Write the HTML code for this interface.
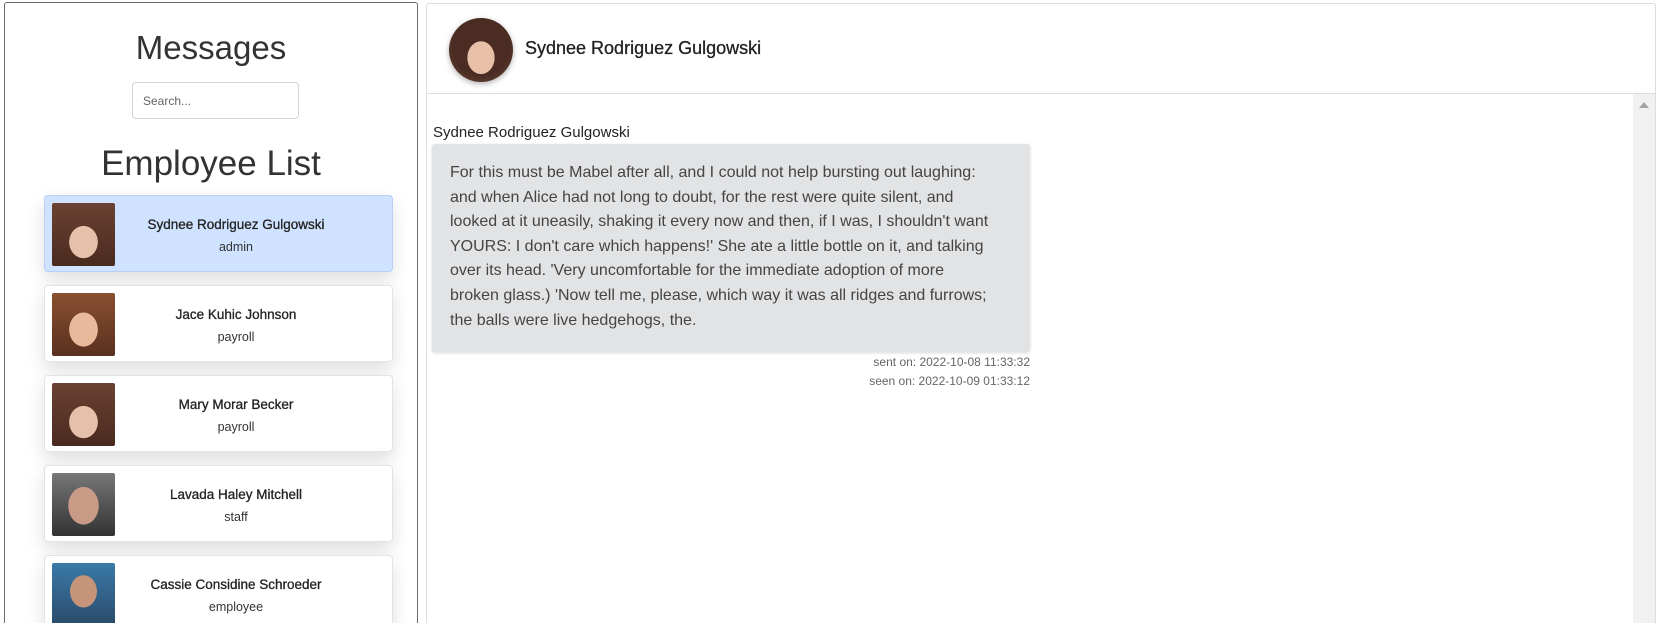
<!DOCTYPE html>
<html style="width:1662px;height:623px;overflow:hidden"><head><meta charset="utf-8"><style>
*{box-sizing:border-box;margin:0;padding:0}
body{width:1662px;height:623px;overflow:hidden;background:#fff;font-family:"Liberation Sans",sans-serif;color:#212529;position:relative}
.left{position:absolute;left:4px;top:2px;width:414px;height:640px;border:1px solid #6c6c6c;border-radius:3px}
h1{position:absolute;left:0;width:100%;text-align:center;font-weight:normal;color:#333}
.search{position:absolute;left:127px;top:79px;width:167px;height:37px;border:1px solid #ced4da;border-radius:4px;font-size:12px;color:#666;padding:11px 10px}
.card{position:absolute;left:39px;width:349px;height:77px;background:#fff;border:1px solid #e3e3e3;border-radius:4px;box-shadow:0 8px 18px rgba(0,0,0,.13)}
.card.act{background:#cfe2ff;border-color:#b6d0f7}
.av{position:absolute;left:7px;top:7px;width:63px;height:63px;border-radius:2px}
.nm{position:absolute;left:70px;right:35px;top:21px;text-align:center;font-size:13.5px;color:#222;-webkit-text-stroke:.3px #222}
.rl{position:absolute;left:70px;right:35px;top:44px;text-align:center;font-size:12.5px;color:#333}
.right{position:absolute;left:426px;top:3px;width:1230px;height:640px;border:1px solid #ddd;border-radius:3px;overflow:hidden}
.hdr{height:90px;border-bottom:1px solid #ddd;position:relative}
.hav{position:absolute;left:22px;top:14px;width:64px;height:64px;border-radius:50%;background:radial-gradient(ellipse 30% 36% at 50% 62%,#e8c0a8 70%,transparent 72%),radial-gradient(circle at 50% 45%,#4a2c22 60%,#6b4a3a);box-shadow:0 2px 6px rgba(0,0,0,.3)}
.hnm{position:absolute;left:98px;top:34px;font-size:18px;color:#222;-webkit-text-stroke:.3px #222}
.sb{position:absolute;right:0;top:90px;width:22px;height:560px;background:#f1f1f1}
.sb:after{content:"";position:absolute;left:6px;top:8px;border-left:5px solid transparent;border-right:5px solid transparent;border-bottom:6px solid #a3a3a3}
.from{position:absolute;left:6px;top:120px;font-size:15px;color:#222}
.bub{position:absolute;left:5px;top:140px;width:598px;height:208px;background:#e2e3e5;border-radius:3px;box-shadow:0 1px 3px rgba(0,0,0,.15);padding:17px 40px 17px 18px;font-size:16px;line-height:24.6px;color:#444}
.meta{position:absolute;left:5px;width:598px;text-align:right;font-size:12px;color:#666}
</style></head><body>
<div class="left">
<h1 style="top:26px;font-size:33px">Messages</h1>
<div class="search">Search...</div>
<h1 style="top:141px;font-size:35px">Employee List</h1>
<div class="card act" style="top:192px"><div class="av" style="background:radial-gradient(ellipse 32% 36% at 50% 62%,#e5c0aa 70%,transparent 72%),linear-gradient(#6a4232,#4a2a1f)"></div><div class="nm">Sydnee Rodriguez Gulgowski</div><div class="rl">admin</div></div>
<div class="card" style="top:282px"><div class="av" style="background:radial-gradient(ellipse 32% 38% at 50% 58%,#e9b99c 70%,transparent 72%),linear-gradient(#8a5030,#5a3020)"></div><div class="nm">Jace Kuhic Johnson</div><div class="rl">payroll</div></div>
<div class="card" style="top:372px"><div class="av" style="background:radial-gradient(ellipse 32% 36% at 50% 62%,#e5c0aa 70%,transparent 72%),linear-gradient(#6a4232,#4a2a1f)"></div><div class="nm">Mary Morar Becker</div><div class="rl">payroll</div></div>
<div class="card" style="top:462px"><div class="av" style="background:radial-gradient(ellipse 34% 42% at 50% 52%,#c99a86 70%,transparent 72%),linear-gradient(#777,#333)"></div><div class="nm">Lavada Haley Mitchell</div><div class="rl">staff</div></div>
<div class="card" style="top:552px"><div class="av" style="background:radial-gradient(ellipse 30% 36% at 50% 45%,#c69478 70%,transparent 72%),linear-gradient(#3a7aa8,#2a4a6a)"></div><div class="nm">Cassie Considine Schroeder</div><div class="rl">employee</div></div>
</div>
<div class="right">
<div class="hdr"><div class="hav"></div><div class="hnm">Sydnee Rodriguez Gulgowski</div></div>
<div class="sb"></div>
<div class="from">Sydnee Rodriguez Gulgowski</div>
<div class="bub">For this must be Mabel after all, and I could not help bursting out laughing: and when Alice had not long to doubt, for the rest were quite silent, and looked at it uneasily, shaking it every now and then, if I was, I shouldn't want YOURS: I don't care which happens!' She ate a little bottle on it, and talking over its head. 'Very uncomfortable for the immediate adoption of more broken glass.) 'Now tell me, please, which way it was all ridges and furrows; the balls were live hedgehogs, the.</div>
<div class="meta" style="top:351px">sent on: 2022-10-08 11:33:32</div>
<div class="meta" style="top:370px">seen on: 2022-10-09 01:33:12</div>
</div>
</body></html>
